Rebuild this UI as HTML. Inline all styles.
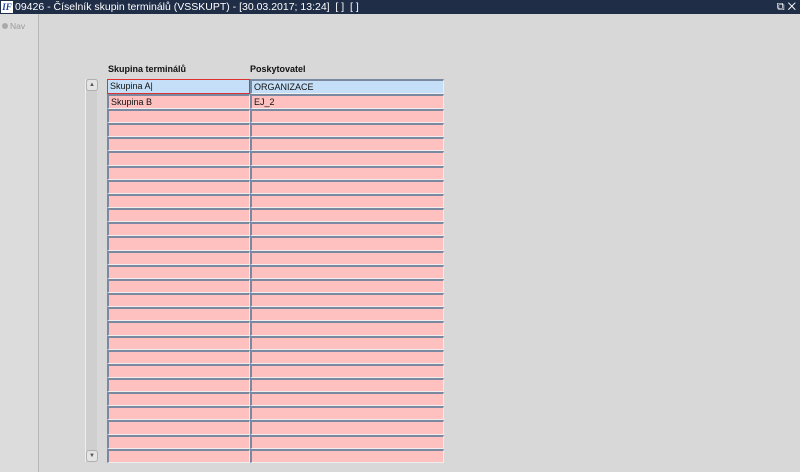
<!DOCTYPE html><html><head><style>
body{margin:0;width:800px;height:472px;background:#d8d8d8;font-family:"Liberation Sans",sans-serif;font-size:9px;position:relative;overflow:hidden}
#tb{position:absolute;left:0;top:0;width:800px;height:14px;background:#1f2d47;color:#fff;font-size:10.5px;line-height:14px}
#tb .ic{position:absolute;left:1px;top:1px;width:12px;height:12px;background:#fff;color:#1b3fa0;font:bold italic 9px/12px "Liberation Serif",serif;text-align:center}
#tb .t{position:absolute;left:15px;top:0}
#lp{position:absolute;left:0;top:14px;width:38px;height:458px;background:#dcdcdc;border-right:1px solid #b8b8b8}
#nav{position:absolute;left:2px;top:7px;color:#9a9a9a;font-size:8.5px}
#nav i{display:inline-block;width:6px;height:6px;border-radius:50%;background:#aaa;margin-right:2px}
.h{position:absolute;top:64px;font-weight:bold;font-size:9px;color:#111}
#sb{position:absolute;left:85px;top:79px;width:11px;height:383px;background:#cfcfcf;border-left:1px solid #eee}
.ar{position:absolute;left:0;width:10px;height:10px;border:1px solid #b0b0b0;border-radius:3px;background:#e4e4e4;font-size:6px;line-height:10px;text-align:center;color:#555}
#g{position:absolute;left:107px;top:79px;width:337px;height:384px;display:flex;flex-direction:column}
.r{flex:1;display:flex}
.c{box-sizing:border-box;background:#ffc0c0;border-top:2px solid #7a88a0;border-left:2px solid #7a88a0;border-right:1px solid #eee;border-bottom:1px solid #eee;padding-left:2px;padding-top:1px;font-size:9px;line-height:11px;color:#111;overflow:hidden}
.c1{width:143px}.c2{width:194px}
.b .c{background:#c4dff7}
.sel{border:1.5px solid #e03030!important}
</style></head><body>
<div id="tb"><div class="ic">IF</div><div class="t">09426 - Číselník skupin terminálů (VSSKUPT) - [30.03.2017; 13:24]&nbsp; [ ]&nbsp; [ ]</div>
<div style="position:absolute;right:4px;top:0;font-size:11px">⧉ ✕</div></div>
<div id="lp"><div id="nav"><i></i>Nav</div></div>
<div class="h" style="left:108px">Skupina terminálů</div>
<div class="h" style="left:250px">Poskytovatel</div>
<div id="sb"><div class="ar" style="top:0">▲</div><div class="ar" style="bottom:0">▼</div></div>
<div id="g">
<div class="r b"><div class="c c1 sel">Skupina A|</div><div class="c c2">ORGANIZACE</div></div>
<div class="r"><div class="c c1">Skupina B</div><div class="c c2">EJ_2</div></div>
<div class="r"><div class="c c1"></div><div class="c c2"></div></div>
<div class="r"><div class="c c1"></div><div class="c c2"></div></div>
<div class="r"><div class="c c1"></div><div class="c c2"></div></div>
<div class="r"><div class="c c1"></div><div class="c c2"></div></div>
<div class="r"><div class="c c1"></div><div class="c c2"></div></div>
<div class="r"><div class="c c1"></div><div class="c c2"></div></div>
<div class="r"><div class="c c1"></div><div class="c c2"></div></div>
<div class="r"><div class="c c1"></div><div class="c c2"></div></div>
<div class="r"><div class="c c1"></div><div class="c c2"></div></div>
<div class="r"><div class="c c1"></div><div class="c c2"></div></div>
<div class="r"><div class="c c1"></div><div class="c c2"></div></div>
<div class="r"><div class="c c1"></div><div class="c c2"></div></div>
<div class="r"><div class="c c1"></div><div class="c c2"></div></div>
<div class="r"><div class="c c1"></div><div class="c c2"></div></div>
<div class="r"><div class="c c1"></div><div class="c c2"></div></div>
<div class="r"><div class="c c1"></div><div class="c c2"></div></div>
<div class="r"><div class="c c1"></div><div class="c c2"></div></div>
<div class="r"><div class="c c1"></div><div class="c c2"></div></div>
<div class="r"><div class="c c1"></div><div class="c c2"></div></div>
<div class="r"><div class="c c1"></div><div class="c c2"></div></div>
<div class="r"><div class="c c1"></div><div class="c c2"></div></div>
<div class="r"><div class="c c1"></div><div class="c c2"></div></div>
<div class="r"><div class="c c1"></div><div class="c c2"></div></div>
<div class="r"><div class="c c1"></div><div class="c c2"></div></div>
<div class="r"><div class="c c1"></div><div class="c c2"></div></div>
</div>
</body></html>
